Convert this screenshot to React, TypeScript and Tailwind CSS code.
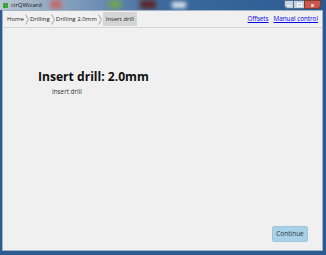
const CRUMBS = ['Home', 'Drilling', 'Drilling 2.0mm'];

function Sep() {
  return (
    <svg width="4" height="11" viewBox="0 0 4 11" className="mx-[1px] text-[#9a9a9a]">
      <polyline points="0.5,0.5 3.5,5.5 0.5,10.5" fill="none" stroke="currentColor" strokeWidth="0.9" />
    </svg>
  );
}

function TitleBar() {
  return (
    <div className="relative flex h-[10px] items-center overflow-hidden bg-[#2f5f95]">
      {/* blurred desktop behind the aero glass */}
      <div className="absolute inset-0 bg-gradient-to-r from-[#b9c6d3] via-[#3c6a9c] to-[#2b5a92]" />
      <div className="absolute left-[50px] top-0 h-[9px] w-[12px] rounded-sm bg-[#c46a6a] blur-[2px]" />
      <div className="absolute left-[108px] top-0 h-[9px] w-[14px] rounded-full bg-[#6fa05c] blur-[2px]" />
      <div className="absolute left-[140px] top-0 h-[9px] w-[16px] bg-[#5a2b2e] blur-[2px]" />
      <div className="absolute left-[172px] top-[2px] h-[6px] w-[14px] bg-[#dfe8ef] blur-[2px]" />
      <div className="relative flex items-center gap-[3px] pl-[3px]">
        <span className="h-[5px] w-[5px] bg-[#3fa33a]" />
        <span className="text-[6px] leading-none text-[#1a1a1a]">cirQWizard</span>
      </div>
      <div className="relative ml-auto mr-[5px] flex h-[9px] self-start">
        <span className="flex w-[10px] items-end justify-center rounded-bl-sm border border-[#4d6e93] bg-[#c7d3df] pb-[2px]">
          <span className="h-[1px] w-[4px] bg-white" />
        </span>
        <span className="flex w-[10px] items-center justify-center border-y border-[#4d6e93] bg-[#c7d3df]">
          <span className="h-[4px] w-[5px] border border-white" />
        </span>
        <span className="flex w-[17px] items-center justify-center rounded-br-sm border border-[#7a3a32] bg-[#c9574a] text-[6px] font-bold leading-none text-white">
          x
        </span>
      </div>
    </div>
  );
}

export default function App() {
  return (
    <div className="flex h-[255px] w-[326px] flex-col bg-[#2c5b92] [font-family:'Open_Sans',sans-serif]">
      <TitleBar />
      <div className="mb-[4px] ml-[2px] mr-[3px] flex flex-1 flex-col border border-[#9fb2c6] bg-[#f0f0f0]">
        <div className="flex h-[17px] items-center border-b border-[#d6d6d6] pl-[4px] pr-[4px] text-[6px] text-[#222]">
          {CRUMBS.map((c) => (
            <span key={c} className="flex items-center">
              <span>{c}</span>
              <Sep />
            </span>
          ))}
          <span className="flex h-[14px] items-center bg-[#d5d5d5] px-[3px]">Insert drill</span>
          <div className="ml-auto flex gap-[5px] text-[6.3px] text-[#0000ee] underline">
            <span>Offsets</span>
            <span>Manual control</span>
          </div>
        </div>
        <div className="flex flex-1 flex-col pl-[35px] pr-[14px] pt-[41px]">
          <h1 className="text-[12.1px] font-bold leading-[15px] text-[#111]">Insert drill: 2.0mm</h1>
          <p className="mt-[3px] pl-[14px] text-[6.3px] text-[#333]">Insert drill</p>
          <div className="mt-auto mb-[8px] flex justify-end">
            <button className="h-[16px] w-[36px] rounded-[2px] border border-[#9cc6dc] bg-[#a8d0e6] text-[6.5px] text-[#2a3a44]">
              Continue
            </button>
          </div>
        </div>
      </div>
    </div>
  );
}
